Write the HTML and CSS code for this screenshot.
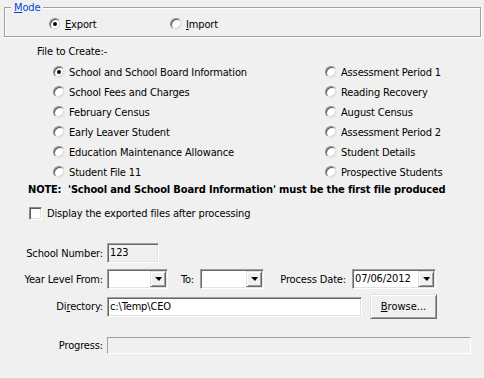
FILE: index.html
```html
<!DOCTYPE html>
<html lang="en">

<head>
  <meta charset="UTF-8">
  <title>Export</title>
  <link rel="stylesheet" href="styles.css">
</head>

<body>
  <div class="panel">
    <fieldset class="group">
      <legend><u>M</u>ode</legend>
      <div class="mode-row">
        <label class="opt"><span class="radio on"></span><span><u>E</u>xport</span></label>
        <label class="opt"><span class="radio"></span><span><u>I</u>mport</span></label>
      </div>
    </fieldset>

    <div class="files-title">File to Create:-</div>
    <div class="file-grid">
      <label class="opt"><span class="radio on"></span>School and School Board Information</label>
      <label class="opt"><span class="radio"></span>School Fees and Charges</label>
      <label class="opt"><span class="radio"></span>February Census</label>
      <label class="opt"><span class="radio"></span>Early Leaver Student</label>
      <label class="opt"><span class="radio"></span>Education Maintenance Allowance</label>
      <label class="opt"><span class="radio"></span>Student File 11</label>
      <label class="opt"><span class="radio"></span>Assessment Period 1</label>
      <label class="opt"><span class="radio"></span>Reading Recovery</label>
      <label class="opt"><span class="radio"></span>August Census</label>
      <label class="opt"><span class="radio"></span>Assessment Period 2</label>
      <label class="opt"><span class="radio"></span>Student Details</label>
      <label class="opt"><span class="radio"></span>Prospective Students</label>
    </div>

    <div class="note">NOTE:&nbsp; 'School and School Board Information' must be the first file produced</div>

    <label class="check-row"><span class="checkbox"></span>Display the exported files after processing</label>

    <div class="fields">
      <div class="row">
        <span class="cap">School Number:</span>
        <div class="field school-no">123</div>
      </div>
      <div class="row row-year">
        <span class="cap">Year Level From:</span>
        <div class="combo year"><span class="combo-text"></span><span class="drop"><i class="arrow"></i></span></div>
        <span class="cap-to">To:</span>
        <div class="combo year-to"><span class="combo-text"></span><span class="drop"><i class="arrow"></i></span></div>
        <span class="cap-date">Process Date:</span>
        <div class="combo date"><span class="combo-text">07/06/2012</span><span class="drop"><i class="arrow"></i></span></div>
      </div>
      <div class="row row-dir">
        <span class="cap">Di<u>r</u>ectory:</span>
        <div class="field dir">c:\Temp\CEO</div>
        <button class="btn"><u>B</u>rowse...</button>
      </div>
      <div class="row row-progress">
        <span class="cap">Progress:</span>
        <div class="progress"></div>
      </div>
    </div>
  </div>
</body>

</html>
```

FILE: styles.css
```css
body {
  margin: 0;
  background: #f0f0f0;
  color: #000;
  font: 11px "DejaVu Sans Condensed", "Liberation Sans", sans-serif;
  letter-spacing: -0.15px;
}

.panel {
  width: 484px;
  height: 378px;
  overflow: hidden;
}

/* mode group box */
.group {
  box-sizing: border-box;
  width: 477px;
  margin: 0 0 0 4px;
  padding: 0 0 3px 0;
  border: 1px solid #a0a0a0;
  box-shadow: inset 1px 1px #fff, 1px 1px #fff;
}

.group legend {
  margin-left: 6px;
  padding: 0 3px;
  line-height: 15px;
  color: #0046d5;
  background: #f0f0f0;
}

.mode-row {
  display: flex;
  align-items: center;
  height: 18px;
  padding-left: 44px;
}

.mode-row .opt {
  width: 121px;
}

.opt {
  display: flex;
  align-items: center;
  gap: 4px;
  white-space: nowrap;
}

.radio {
  position: relative;
  flex: none;
  box-sizing: border-box;
  width: 12px;
  height: 12px;
  border: 1px solid;
  border-color: #8a8a8a #e6e6e6 #e6e6e6 #8a8a8a;
  border-radius: 50%;
  background: #fff;
  box-shadow: inset 1px 1px #5a5a5a, inset -1px -1px #d8d8d8;
}

.radio.on::after {
  content: "";
  position: absolute;
  left: 3px;
  top: 3px;
  width: 4px;
  height: 4px;
  border-radius: 50%;
  background: #000;
}

/* file list */
.files-title {
  margin: 8px 0 0 37px;
  line-height: 14px;
}

.file-grid {
  display: grid;
  grid-template-columns: 272px 1fr;
  grid-template-rows: repeat(6, 20px);
  grid-auto-flow: column;
  margin: 3px 0 0 53px;
}

.note {
  margin: 1px 0 0 28px;
  line-height: 14px;
  font-weight: bold;
  white-space: nowrap;
}

.check-row {
  display: flex;
  align-items: center;
  gap: 5px;
  height: 14px;
  margin: 9px 0 0 29px;
}

.checkbox {
  flex: none;
  box-sizing: border-box;
  width: 13px;
  height: 13px;
  border: 1px solid;
  border-color: #8a8a8a #fff #fff #8a8a8a;
  background: #fff;
  box-shadow: inset 1px 1px #5a5a5a, inset -1px -1px #e3e3e3;
}

/* lower fields */
.fields {
  display: flex;
  flex-direction: column;
  margin-top: 23px;
}

.row {
  display: flex;
  align-items: center;
  height: 20px;
}

.row-year {
  margin-top: 6px;
}

.row-dir {
  height: 25px;
  margin-top: 5px;
}

.row-progress {
  height: 17px;
  margin-top: 18px;
}

.cap {
  box-sizing: border-box;
  width: 107px;
  padding-right: 4px;
  text-align: right;
  white-space: nowrap;
}

.cap-to {
  box-sizing: border-box;
  width: 32px;
  padding-right: 6px;
  text-align: right;
}

.cap-date {
  box-sizing: border-box;
  width: 88px;
  padding-right: 6px;
  text-align: right;
  white-space: nowrap;
}

.field,
.combo {
  box-sizing: border-box;
  height: 20px;
  border: 1px solid;
  border-color: #a0a0a0 #fff #fff #a0a0a0;
  box-shadow: inset 1px 1px #696969, inset -1px -1px #e3e3e3;
}

.field {
  padding: 0 2px;
  line-height: 18px;
  white-space: nowrap;
}

.school-no {
  width: 52px;
  background: #f0f0f0;
}

.dir {
  width: 255px;
  background: #fff;
}

.combo {
  display: flex;
  padding: 1px;
  background: #fff;
}

.combo-text {
  flex: 1;
  padding-left: 1px;
  line-height: 16px;
}

.year {
  width: 61px;
}

.year-to {
  width: 64px;
}

.date {
  width: 84px;
}

.drop {
  display: flex;
  align-items: center;
  justify-content: center;
  box-sizing: border-box;
  width: 16px;
  border: 1px solid;
  border-color: #e3e3e3 #696969 #696969 #e3e3e3;
  background: #f0f0f0;
  box-shadow: inset 1px 1px #fff, inset -1px -1px #a0a0a0;
}

.arrow {
  width: 0;
  height: 0;
  border-top: 4px solid #000;
  border-left: 4px solid transparent;
  border-right: 3px solid transparent;
}

.btn {
  box-sizing: border-box;
  width: 67px;
  height: 25px;
  margin-left: 8px;
  padding: 0;
  font: inherit;
  color: #000;
  border: 1px solid;
  border-color: #e3e3e3 #696969 #696969 #e3e3e3;
  background: #f0f0f0;
  box-shadow: inset 1px 1px #fff, inset -1px -1px #a0a0a0;
}

.progress {
  box-sizing: border-box;
  width: 364px;
  height: 17px;
  border: 1px solid;
  border-color: #a0a0a0 #fff #fff #a0a0a0;
}
```
